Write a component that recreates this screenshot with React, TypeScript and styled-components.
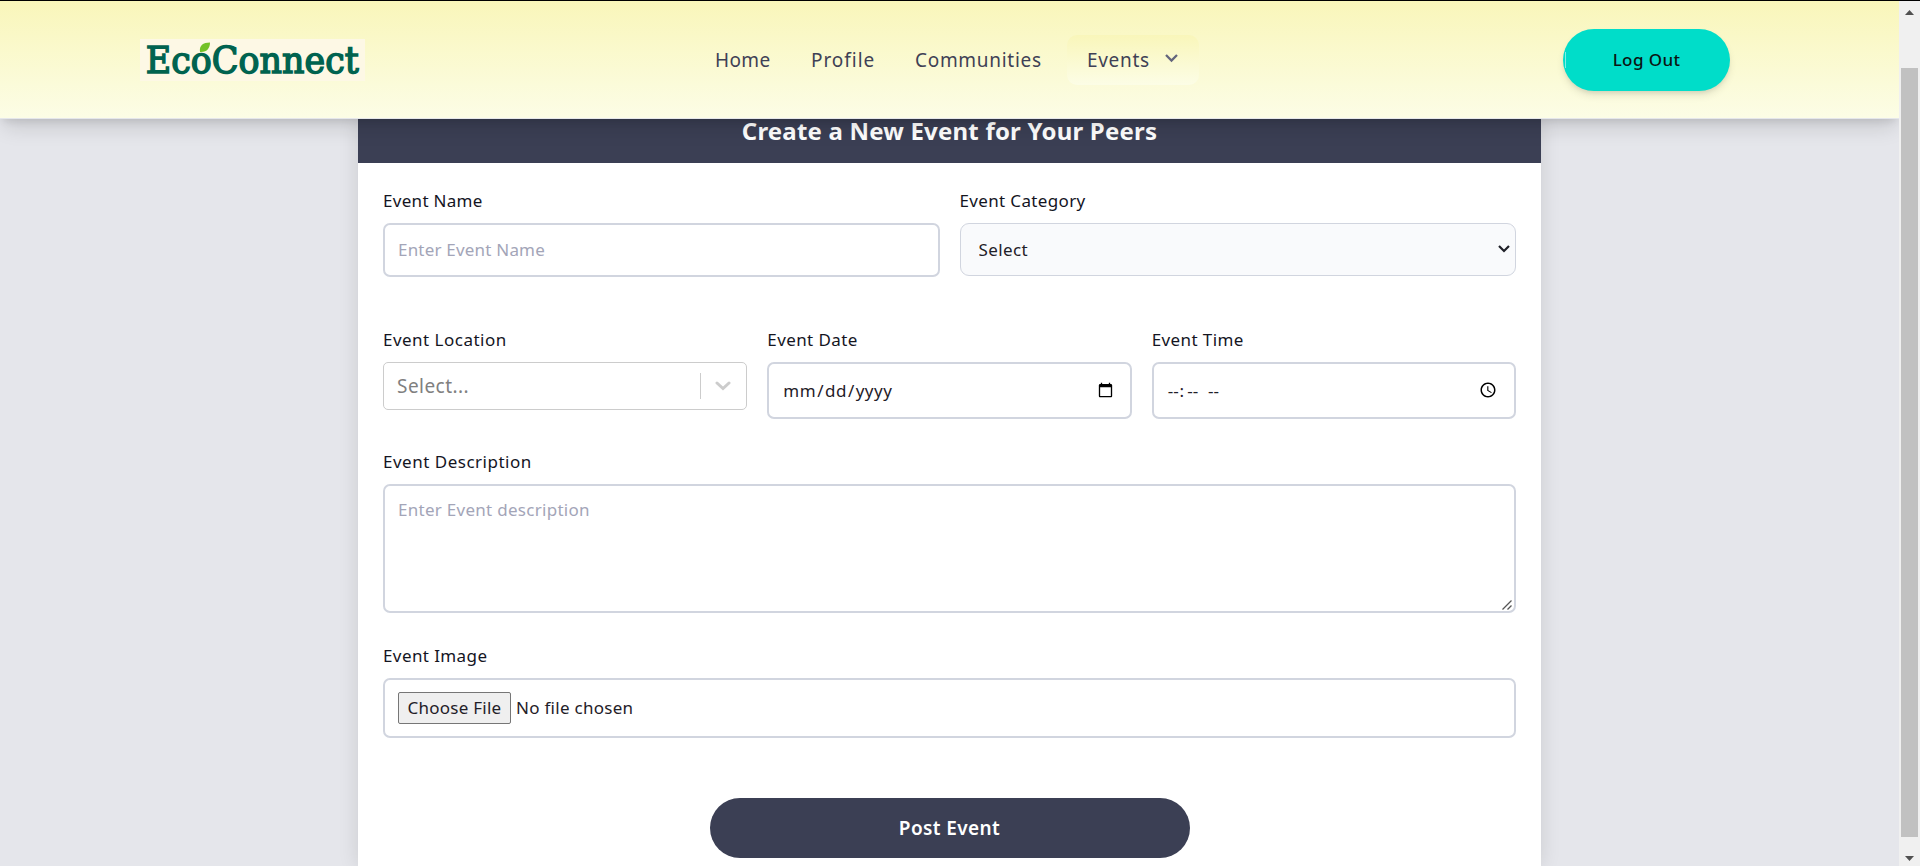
import React from 'react';
import styled, { createGlobalStyle } from 'styled-components';

const GlobalStyle = createGlobalStyle`
  *, *::before, *::after { box-sizing: border-box; }
  body { margin: 0; overflow: hidden; font-family: 'Noto Sans', 'Open Sans', sans-serif; color: #111827; }
  input, select, textarea, button { font-family: inherit; margin: 0; color: #1f2028; }
`;

const Window = styled.div`
  display: flex;
  width: 1920px;
  height: 866px;
  border-top: 1px solid #000;
  overflow: hidden;
  background: #e5e7eb;
`;

const Page = styled.div`
  display: flex;
  flex-direction: column;
  width: 1899px;
  height: 865px;
  overflow: hidden;
  background: #e5e6eb;
`;

const Header = styled.header`
  position: relative;
  z-index: 2;
  flex: none;
  display: grid;
  grid-template-columns: 567px 1fr 336px;
  align-items: center;
  height: 118px;
  padding: 0 0 0 140px;
  background: linear-gradient(#f9f6ba, #fcfde6);
  border-bottom: 1px solid #e5e7eb;
  box-shadow: 0 13px 19px -4px rgba(0, 0, 0, 0.12), 0 5px 8px -3px rgba(0, 0, 0, 0.1);
`;

const Logo = styled.svg`
  display: block;
  overflow: visible;
  background: #fdf8e5;
`;

const Nav = styled.nav`
  display: flex;
  align-items: center;
  height: 50px;
  padding-left: 8px;
`;

const NavLink = styled.a<{ $w: number; $ls: number }>`
  flex: none;
  width: ${(p) => p.$w}px;
  font-size: 19px;
  line-height: 28px;
  letter-spacing: ${(p) => p.$ls}px;
  color: #3f4155;
  white-space: nowrap;
`;

const EventsMenu = styled.div`
  display: flex;
  align-items: center;
  width: 132px;
  height: 50px;
  padding-left: 20px;
  border-radius: 10px;
  background: linear-gradient(#f9f6ba, #fcfde6);
`;

const LogOut = styled.button`
  position: relative;
  width: 167px;
  height: 62px;
  padding: 0 0 1px;
  border: 0;
  border-radius: 31px;
  background: #00ddc9;
  box-shadow: 0 5px 8px -1px rgba(0, 0, 0, 0.1), 0 3px 5px -2px rgba(0, 0, 0, 0.1);
  font-size: 17px;
  font-weight: 500;
  letter-spacing: 0.4px;
  && { color: #0b1512; }
  &::before {
    content: '';
    position: absolute;
    left: 2px;
    top: 23px;
    width: 1px;
    height: 16px;
    background: #7fefe4;
  }
`;

const Card = styled.main`
  width: 1183px;
  height: 760px;
  margin-left: 358px;
  background: #fff;
  box-shadow: 0 0 19px rgba(0, 0, 0, 0.12);
`;

const Title = styled.h1`
  display: flex;
  justify-content: center;
  height: 44px;
  margin: 0;
  background: #3b3f54;
  color: #fff;
  font-size: 24px;
  line-height: 24px;
  font-weight: 700;
  letter-spacing: 0.2px;
`;

const Form = styled.form`
  display: flex;
  flex-direction: column;
  padding: 25px 25px 0;
`;

const Row = styled.div<{ $cols: number; $h: number }>`
  display: grid;
  grid-template-columns: repeat(${(p) => p.$cols}, 1fr);
  column-gap: 20px;
  align-items: start;
  height: ${(p) => p.$h}px;
`;

const Field = styled.div`
  display: flex;
  flex-direction: column;
  min-width: 0;
`;

const Label = styled.label<{ $ls: number }>`
  height: 35px;
  font-size: 17px;
  line-height: 25px;
  letter-spacing: ${(p) => p.$ls}px;
  color: #14151f;
`;

const Input = styled.input<{ $h: number; $ls: number }>`
  width: 100%;
  height: ${(p) => p.$h}px;
  padding: 0 14px 1px 13px;
  border: 2px solid #d1d5df;
  border-radius: 7px;
  background: #fff;
  font-size: 17px;
  letter-spacing: ${(p) => p.$ls}px;
  &::placeholder { color: #a3a5b8; }
  &::-webkit-datetime-edit-ampm-field { margin-left: 5px; }
  &::-webkit-datetime-edit-minute-field { margin-left: 2px; }
`;

const Overlay = styled.div`
  position: relative;
`;

const Select = styled.select`
  appearance: none;
  display: block;
  width: 100%;
  height: 53px;
  padding: 0 17px 0 18px;
  border: 1px solid #d1d5df;
  border-radius: 9px;
  background: #f9fafc;
  font-size: 17px;
  letter-spacing: 0.4px;
`;

const SelectArrow = styled.svg`
  position: absolute;
  right: 6px;
  top: 22px;
`;

const Area = styled.textarea`
  display: block;
  width: 100%;
  height: 129px;
  padding: 11px 13px;
  border: 2px solid #d1d5df;
  border-radius: 7px;
  font-size: 17px;
  line-height: 26px;
  letter-spacing: 0.28px;
  resize: none;
  &::placeholder { color: #a3a5b8; }
`;

const Grip = styled.svg`
  position: absolute;
  right: 4px;
  bottom: 3px;
`;

const LocationSelect = styled.div`
  display: flex;
  align-items: center;
  height: 48px;
  padding-left: 13px;
  border: 1px solid #ccc;
  border-radius: 5px;
  color: #808080;
  font-size: 19px;
  letter-spacing: 0.45px;
`;

const LocationValue = styled.span`
  flex: 1;
`;

const Divider = styled.span`
  width: 1px;
  height: 26px;
  background: #ccc;
`;

const Chevron = styled.svg<{ $ml: number; $mr: number }>`
  flex: none;
  display: block;
  margin-left: ${(p) => p.$ml}px;
  margin-right: ${(p) => p.$mr}px;
`;

const FileBox = styled.div`
  display: flex;
  align-items: center;
  height: 60px;
  padding: 0 0 1px 13px;
  border: 2px solid #d1d5df;
  border-radius: 7px;
  font-size: 17px;
  letter-spacing: 0.28px;
  color: #1f2028;
`;

const ChooseFile = styled.button`
  width: 113px;
  height: 32px;
  margin-right: 5px;
  padding: 0;
  border: 1px solid #767676;
  border-radius: 2px;
  background: #efefef;
  font-size: 17px;
  line-height: 28px;
  letter-spacing: 0.25px;
`;

const PostButton = styled.button`
  align-self: center;
  width: 480px;
  height: 60px;
  padding: 0;
  border: 0;
  border-radius: 30px;
  background: #3b3f54;
  font-size: 19px;
  font-weight: 600;
  letter-spacing: 0.4px;
  && { color: #fff; }
`;

const Scrollbar = styled.aside`
  display: flex;
  flex-direction: column;
  align-items: center;
  justify-content: space-between;
  width: 21px;
  height: 865px;
  padding: 9px 0 5px;
  background: #f0f0f0;
`;

const Thumb = styled.div`
  width: 17px;
  height: 769px;
  margin-top: 34px;
  background: #c1c1c1;
`;

const Arrow = styled.svg`
  display: block;
  fill: #505050;
`;

export default function App() {
  return (
    <Window>
      <GlobalStyle />
      <Page>
        <Header>
          <Logo width="225" height="42" viewBox="0 0 225 42">
            <text x="5.8" y="33.5" fontFamily="'DejaVu Serif', serif" fontSize="36.500" fill="#00634f" stroke="#00634f" strokeWidth="1.500" textLength="213" lengthAdjust="spacingAndGlyphs">EcoConnect</text>
            <path d="M60 13C59 6.500 63 3.500 70 3.500C70 9 67 13.500 60 13Z" fill="#74c226" />
          </Logo>
          <Nav>
            <NavLink $w={96} $ls={0.4}>Home</NavLink>
            <NavLink $w={104} $ls={0.95}>Profile</NavLink>
            <NavLink $w={152} $ls={0.7}>Communities</NavLink>
            <EventsMenu>
              <NavLink $w={78} $ls={0.7}>Events</NavLink>
              <Chevron $ml={0} $mr={0} width="13" height="11" viewBox="0 0 13 11">
                <path d="M1 1L6.500 6.500L12 1" fill="none" stroke="#63657c" strokeWidth="2.300" />
              </Chevron>
            </EventsMenu>
          </Nav>
          <LogOut>Log Out</LogOut>
        </Header>
        <Card>
          <Title>Create a New Event for Your Peers</Title>
          <Form>
            <Row $cols={2} $h={139}>
              <Field>
                <Label $ls={0.3}>Event Name</Label>
                <Input $h={54} $ls={0.2} placeholder="Enter Event Name" />
              </Field>
              <Field>
                <Label $ls={0.35}>Event Category</Label>
                <Overlay>
                  <Select><option>Select</option></Select>
                  <SelectArrow width="12" height="8" viewBox="0 0 12 8">
                    <path d="M1 1L6 6L11 1" fill="none" stroke="#1f2028" strokeWidth="2.200" />
                  </SelectArrow>
                </Overlay>
              </Field>
            </Row>
            <Row $cols={3} $h={122}>
              <Field>
                <Label $ls={0.48}>Event Location</Label>
                <LocationSelect>
                  <LocationValue>Select...</LocationValue>
                  <Divider />
                  <Chevron $ml={14} $mr={15} width="16" height="10" viewBox="0 0 16 10">
                    <path d="M2 2L8 7.500L14 2" fill="none" stroke="#ccc" strokeWidth="3" strokeLinecap="round" />
                  </Chevron>
                </LocationSelect>
              </Field>
              <Field>
                <Label $ls={0.4}>Event Date</Label>
                <Input type="date" $h={57} $ls={0.5} />
              </Field>
              <Field>
                <Label $ls={0.4}>Event Time</Label>
                <Input type="time" $h={57} $ls={1} />
              </Field>
            </Row>
            <Row $cols={1} $h={194}>
              <Field>
                <Label $ls={0.5}>Event Description</Label>
                <Overlay>
                  <Area placeholder="Enter Event description" />
                  <Grip width="10" height="10" viewBox="0 0 10 10">
                    <path d="M0.500 9.500L9.500 0.500M5.500 9.500L9.500 5.500" fill="none" stroke="#555" strokeWidth="1.300" />
                  </Grip>
                </Overlay>
              </Field>
            </Row>
            <Row $cols={1} $h={155}>
              <Field>
                <Label $ls={0.4}>Event Image</Label>
                <FileBox>
                  <ChooseFile type="button">Choose File</ChooseFile>
                  No file chosen
                </FileBox>
              </Field>
            </Row>
            <PostButton type="button">Post Event</PostButton>
          </Form>
        </Card>
      </Page>
      <Scrollbar>
        <Arrow width="9" height="5" viewBox="0 0 9 5"><path d="M0 5L4.500 0L9 5Z" /></Arrow>
        <Thumb />
        <Arrow width="9" height="5" viewBox="0 0 9 5"><path d="M0 0L4.500 5L9 0Z" /></Arrow>
      </Scrollbar>
    </Window>
  );
}
